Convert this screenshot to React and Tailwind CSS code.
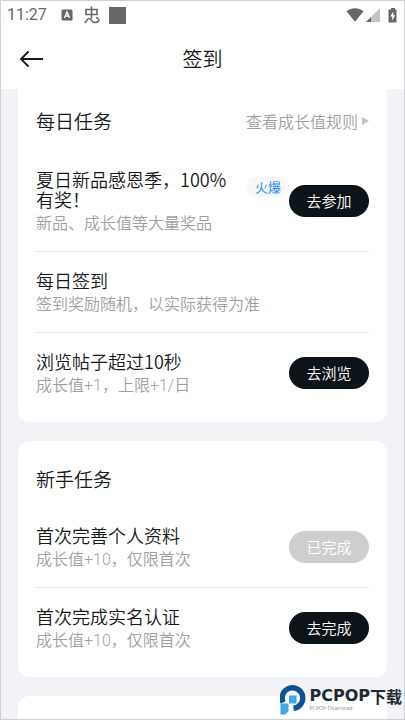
import clsx from 'clsx';

const dailyTasks = [
  { id: 'summer', title: '夏日新品感恩季，100%有奖！', desc: '新品、成长值等大量奖品', tag: '火爆', action: '去参加' },
  { id: 'checkin', title: '每日签到', desc: '签到奖励随机，以实际获得为准' },
  { id: 'browse', title: '浏览帖子超过10秒', desc: '成长值+1，上限+1/日', action: '去浏览' },
];

const newbieTasks = [
  { id: 'profile', title: '首次完善个人资料', desc: '成长值+10，仅限首次', action: '已完成', done: true },
  { id: 'verify', title: '首次完成实名认证', desc: '成长值+10，仅限首次', action: '去完成' },
];

function StatusBar() {
  return (
    <div className="flex h-7 items-center justify-between px-1.5 font-normal text-[#666]">
      <div className="flex items-center">
        <span className="font-['Roboto',sans-serif] text-base">11:27</span>
        <svg className="ml-3.5" width="12" height="12" viewBox="0 0 12 12">
          <rect x="0.5" y="0.5" width="11" height="11" rx="1.5" fill="currentColor" />
          <path d="M3.4 9 6 3l2.6 6M4.4 7h3.2" fill="none" stroke="#fff" strokeWidth="1.3" />
        </svg>
        <svg className="ml-2.5" width="18" height="18" viewBox="0 0 18 18" fill="none" stroke="currentColor" strokeWidth="1.6">
          <path d="M3 3.500h11v5H3zM8.500 0.500v12" />
          <path d="M1.500 16.500C4.500 16.500 3 12.500 6 12.500c2.500 0 2 4 6 4 2.500 0 4-1 4-3.500M13 11.500l2.500 1" />
        </svg>
        <svg className="ml-2" width="17" height="17" viewBox="0 0 17 17">
          <rect width="17" height="17" fill="currentColor" />
        </svg>
      </div>
      <div className="flex items-center">
        <svg width="18" height="14" viewBox="0 0 18 14" fill="currentColor">
          <path d="M0.500 3.200C5.500-.9 12.500-.9 17.500 3.200L9 13.800z" />
        </svg>
        <svg className="ml-0.5" width="14" height="14" viewBox="0 0 14 14" fill="currentColor">
          <path d="M14 0v14H0z" opacity="0.4" />
          <path d="M5 9v5H0z" />
        </svg>
        <svg className="ml-2" width="10" height="15" viewBox="0 0 10 15">
          <path d="M3 0h4v1.500h1.500v13h-8v-13H3z" fill="currentColor" />
          <path d="M5.300 3.500 2.200 8.500h2v4L7.300 7.300H5.300z" fill="#fff" />
        </svg>
      </div>
    </div>
  );
}

function TaskRow({ task }) {
  return (
    <li className="flex items-center border-b border-[#e8e8ea] last:border-b-0">
      <div className="min-w-0 flex-1 pt-[18px] pr-3 pb-3">
        <h3 className="text-lg leading-5 text-[#15181c]">{task.title}</h3>
        <p className="font-['Roboto','Noto_Sans_CJK_SC',sans-serif] text-base leading-[30px] text-[#9f9f9f]">{task.desc}</p>
      </div>
      {task.tag && (
        <span className="mt-[26px] self-start rounded-lg bg-[#f6f8fb] px-2 text-[13px] leading-5 text-[#1684e8]">
          {task.tag}
        </span>
      )}
      {task.action && (
        <button
          type="button"
          disabled={task.done}
          className={clsx(
            'h-8 w-20 shrink-0 rounded-full text-[15px] text-white',
            task.done ? 'bg-[#cdced0]' : 'bg-[#0c1319]'
          )}
        >
          {task.action}
        </button>
      )}
    </li>
  );
}

function TaskList({ tasks }) {
  return (
    <ul>
      {tasks.map((task) => (
        <TaskRow key={task.id} task={task} />
      ))}
    </ul>
  );
}

function Watermark() {
  return (
    <div className="absolute right-0.5 bottom-1 flex items-center gap-0.5">
      <svg width="27" height="30" viewBox="0 0 27 30">
        <path d="M3.200 17.500A10.300 10.300 0 1 1 13.500 23.300" fill="none" stroke="#0b5394" strokeWidth="5.400" />
        <path d="M9 10.500h7.500v8H9zM0.500 18.500h8v8L5 29.500H.5z" fill="#3fa9e8" />
      </svg>
      <div className="text-[#222b33]">
        <p className="flex items-center font-['DejaVu_Sans',sans-serif] text-base leading-4 font-bold">
          PCPOP
          <span className="font-['Noto_Sans_CJK_SC',sans-serif] text-base leading-4">下载</span>
        </p>
        <p className="font-['DejaVu_Sans',sans-serif] text-[5px] leading-2">PCPOP Download</p>
      </div>
    </div>
  );
}

export default function App() {
  return (
    <div className="relative flex h-screen flex-col overflow-hidden border border-[#cfd0d3] bg-[#f2f3f7] font-['Noto_Sans_CJK_SC',sans-serif] font-[350]">
      <header className="shrink-0 bg-white">
        <StatusBar />
        <div className="grid h-15 grid-cols-[1fr_auto_1fr] items-center px-[18px]">
          <button type="button" aria-label="返回" className="text-[#15181c]">
            <svg width="25" height="18" viewBox="0 0 25 18" fill="none" stroke="currentColor" strokeWidth="1.8">
              <path d="M24 9H2M9.500 1.500 2 9l7.500 7.500" />
            </svg>
          </button>
          <h1 className="text-xl text-[#15181c]">签到</h1>
        </div>
      </header>

      <main className="flex flex-1 flex-col gap-[19px] overflow-hidden px-[17px]">
        <section className="shrink-0 rounded-b-xl bg-white px-[18px] pb-[9px]">
          <div className="flex items-center justify-between pt-5 pb-[18px]">
            <h2 className="text-[19px] leading-6 text-[#15181c]">每日任务</h2>
            <a href="#rules" className="flex items-center gap-1 text-base leading-5 text-[#9f9f9f]">
              查看成长值规则
              <svg width="7" height="8" viewBox="0 0 7 8" fill="#c4c4c6">
                <path d="M0 0l7 4-7 4z" />
              </svg>
            </a>
          </div>
          <TaskList tasks={dailyTasks} />
        </section>

        <section className="shrink-0 rounded-xl bg-white px-[18px] pb-[9px]">
          <h2 className="pt-[26px] pb-4 text-[19px] leading-6 text-[#15181c]">新手任务</h2>
          <TaskList tasks={newbieTasks} />
        </section>

        <section className="h-40 shrink-0 rounded-xl bg-white" />
      </main>

      <Watermark />
    </div>
  );
}
